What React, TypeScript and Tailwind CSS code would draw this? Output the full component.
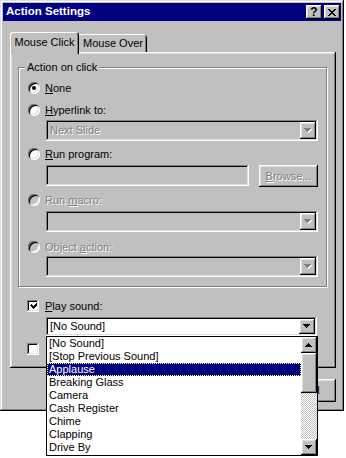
import type { ReactNode } from 'react'

// Win98 bevels, written out so Tailwind picks them up
const RAISED = 'shadow-[inset_-1px_-1px_#000,inset_1px_1px_#fff,inset_-2px_-2px_#808080,inset_2px_2px_#dfdfdf]'
const SUNKEN = 'shadow-[inset_-1px_-1px_#fff,inset_1px_1px_#808080,inset_-2px_-2px_#dfdfdf,inset_2px_2px_#000]'
const DIM = 'text-[#808080] [text-shadow:1px_1px_0_#fff]'

const SOUNDS = [
  '[No Sound]',
  '[Stop Previous Sound]',
  'Applause',
  'Breaking Glass',
  'Camera',
  'Cash Register',
  'Chime',
  'Clapping',
  'Drive By',
]

function Tri({ up = false, dim = false }: { up?: boolean; dim?: boolean }) {
  const d = up
    ? 'M3 0h1v1H3zM2 1h3v1H2zM1 2h5v1H1zM0 3h7v1H0z'
    : 'M0 0h7v1H0zM1 1h5v1H1zM2 2h3v1H2zM3 3h1v1H3z'
  return (
    <svg width="8" height="5" viewBox="0 0 8 5" shapeRendering="crispEdges">
      {dim && <path d={d} fill="#fff" transform="translate(1 1)" />}
      <path d={d} fill={dim ? '#808080' : '#000'} />
    </svg>
  )
}

function Combo({ value, dim = false, className = '' }: { value?: string; dim?: boolean; className?: string }) {
  return (
    <div className={`flex p-[2px] ${SUNKEN} ${dim ? 'bg-[#c0c0c0]' : 'bg-white'} ${className}`}>
      <span className={`flex flex-1 items-center pl-[2px] ${dim ? DIM : 'text-black'}`}>{value}</span>
      <span className={`flex w-[16px] items-center justify-center bg-[#c0c0c0] ${RAISED}`}>
        <Tri dim={dim} />
      </span>
    </div>
  )
}

function Radio({ on = false, dim = false, className = '', children }: { on?: boolean; dim?: boolean; className?: string; children: ReactNode }) {
  return (
    <div className={`flex h-[16px] items-center gap-[5px] pl-[9px] ${className}`}>
      <span
        className={`flex size-[12px] items-center justify-center rounded-full ${dim ? 'bg-[#c0c0c0]' : 'bg-white'} shadow-[inset_1px_1px_#808080,inset_-1px_-1px_#fff,inset_2px_2px_#000,inset_-2px_-2px_#dfdfdf]`}
      >
        {on && <span className="size-[4px] rounded-full bg-black" />}
      </span>
      <span className={dim ? DIM : 'text-black'}>{children}</span>
    </div>
  )
}

function Check({ on = false, className = '', label, children }: { on?: boolean; className?: string; label?: string; children?: ReactNode }) {
  return (
    <div className={`flex h-[14px] items-center gap-[6px] pl-[9px] ${className}`} aria-label={label}>
      <span className={`flex size-[12px] items-center justify-center bg-white ${SUNKEN}`}>
        {on && (
          <svg width="7" height="7" viewBox="0 0 7 7" shapeRendering="crispEdges">
            <path d="M6 0h1v3H6zM5 1h1v3H5zM4 2h1v3H4zM3 3h1v3H3zM2 2h1v3H2zM1 1h1v3H1zM0 2h1v1H0z" fill="#000" />
          </svg>
        )}
      </span>
      {children && <span className="text-black">{children}</span>}
    </div>
  )
}

function U({ children }: { children: ReactNode }) {
  return <span className="underline underline-offset-[1px]">{children}</span>
}

function TitleButton({ children }: { children: ReactNode }) {
  return (
    <span className={`flex h-[14px] w-[16px] items-center justify-center bg-[#c0c0c0] ${RAISED}`}>{children}</span>
  )
}

function SoundList() {
  return (
    <div className="absolute top-[336px] left-[46px] flex h-[120px] w-[272px] border border-black bg-white">
      <div className="flex flex-1 flex-col">
        {SOUNDS.map((s) => (
          <div
            key={s}
            className={`h-[13px] pl-[2px] leading-[13px] ${
              s === 'Applause'
                ? 'bg-[#000080] text-white outline-1 -outline-offset-1 outline-[#ffff80] outline-dotted'
                : 'text-black'
            }`}
          >
            {s}
          </div>
        ))}
      </div>
      <div className="flex w-[16px] flex-col">
        <span className={`flex h-[16px] items-center justify-center bg-[#c0c0c0] ${RAISED}`}>
          <Tri up />
        </span>
        <span className={`h-[40px] bg-[#c0c0c0] ${RAISED}`} />
        <span className="flex-1 bg-[image:conic-gradient(#fff_25%,#c0c0c0_0_50%,#fff_0_75%,#c0c0c0_0)] bg-[length:2px_2px]" />
        <span className={`flex h-[16px] items-center justify-center bg-[#c0c0c0] ${RAISED}`}>
          <Tri />
        </span>
      </div>
    </div>
  )
}

export default function App() {
  return (
    <div className="min-h-screen bg-white font-['Liberation_Sans',Arial,sans-serif] text-[11px] leading-none">
      <div
        className={`relative flex h-[411px] w-[344px] flex-col bg-[#c0c0c0] p-[3px] shadow-[inset_-1px_-1px_#000,inset_1px_1px_#dfdfdf,inset_-2px_-2px_#808080,inset_2px_2px_#fff]`}
      >
        {/* title bar */}
        <div className="flex h-[18px] items-center justify-between bg-[#000080] pr-[1px] pl-[3px]">
          <span className="text-[11.5px] font-bold text-white">Action Settings</span>
          <div className="flex gap-[2px]">
            <TitleButton>
              <span className="text-[12px] font-bold text-black">?</span>
            </TitleButton>
            <TitleButton>
              <svg width="8" height="7" viewBox="0 0 8 7" shapeRendering="crispEdges">
                <path
                  d="M0 0h2v1H0zM6 0h2v1H6zM1 1h2v1H1zM5 1h2v1H5zM2 2h4v1H2zM3 3h2v1H3zM2 4h4v1H2zM1 5h2v1H1zM5 5h2v1H5zM0 6h2v1H0zM6 6h2v1H6z"
                  fill="#000"
                />
              </svg>
            </TitleButton>
          </div>
        </div>

        <div className="flex flex-col pt-[11px] pl-[7px]">
          {/* tabs */}
          <div className="flex h-[20px] items-end">
            <span className="relative z-10 -mb-[2px] flex h-[22px] w-[69px] items-start justify-center rounded-t-[3px] bg-[#c0c0c0] pt-[5px] text-black shadow-[inset_1px_1px_#fff,inset_-1px_0_#000,inset_-2px_0_#808080]">
              Mouse Click
            </span>
            <span className="flex h-[18px] w-[68px] items-center justify-center rounded-tr-[3px] pt-[1px] text-black shadow-[inset_0_1px_#fff,inset_-1px_0_#000,inset_-2px_0_#808080]">
              Mouse Over
            </span>
          </div>

          {/* tab page */}
          <div className={`flex h-[316px] w-[326px] flex-col pt-[15px] pr-[9px] pl-[8px] ${RAISED}`}>
            <div className="relative flex h-[220px] flex-col border border-[#808080] shadow-[1px_1px_0_#fff,inset_1px_1px_0_#fff]">
              <span className="absolute -top-[7px] left-[6px] bg-[#c0c0c0] px-[2px] leading-[13px] text-black">
                Action on click
              </span>
              <Radio on className="mt-[12px]">
                <U>N</U>one
              </Radio>
              <Radio className="mt-[6px]">
                <U>H</U>yperlink to:
              </Radio>
              <Combo dim value="Next Slide" className="mt-[2px] mr-[8px] ml-[27px] h-[21px]" />
              <Radio className="mt-[5px]">
                <U>R</U>un program:
              </Radio>
              <div className="mt-[3px] mr-[8px] ml-[27px] flex h-[22px] gap-[10px]">
                <span className={`h-[21px] flex-1 bg-[#c0c0c0] ${SUNKEN}`} />
                <span className={`flex w-[59px] items-center justify-center bg-[#c0c0c0] ${RAISED} ${DIM}`}>
                  <U>B</U>rowse...
                </span>
              </div>
              <Radio dim className="mt-[5px]">
                Run <U>m</U>acro:
              </Radio>
              <Combo dim className="mt-[3px] mr-[8px] ml-[27px] h-[21px]" />
              <Radio dim className="mt-[7px]">
                Object <U>a</U>ction:
              </Radio>
              <Combo dim className="mt-[1px] mr-[8px] ml-[27px] h-[21px]" />
            </div>

            <Check on className="mt-[12px]">
              <U>P</U>lay sound:
            </Check>
            <Combo value="[No Sound]" className="mt-[4px] ml-[28px] h-[19px] w-[271px]" />
            {/* label sits under the open list */}
            <Check label="Highlight click" className="mt-[6px]" />
          </div>

          {/* dialog buttons, mostly under the open list */}
          <div className="mt-[11px] flex w-[326px] justify-end gap-[6px]">
            <span className={`h-[23px] w-[67px] bg-[#c0c0c0] ${RAISED}`} aria-label="OK" />
            <span className={`flex h-[23px] w-[67px] items-center justify-center bg-[#c0c0c0] text-black ${RAISED}`}>
              Cancel
            </span>
          </div>
        </div>

        <SoundList />
      </div>
    </div>
  )
}
